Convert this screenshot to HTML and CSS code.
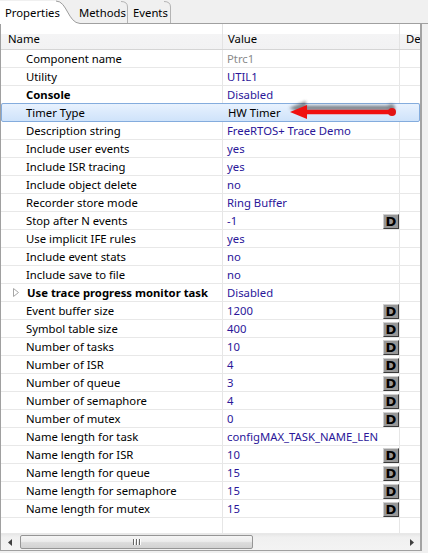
FILE: index.html
```html
<!DOCTYPE html>
<html>
<head>
<meta charset="utf-8">
<link rel="stylesheet" href="styles.css">
</head>
<body>
<div class="tabs">
  <svg class="tabshape" width="428" height="24" viewBox="0 0 428 24">
    <path d="M0,24 L0,1 L56,1 C67,1 68,23 80,23 L80,24 Z" fill="#ffffff"/>
    <path d="M56,1 C67,1 68,23 80,23.5" fill="none" stroke="#9c9c9c" stroke-width="1"/>
    <path d="M80,23.5 H428" fill="none" stroke="#a0a0a0" stroke-width="1"/>
    <path d="M121,1.5 Q127.5,1.5 127.5,7 V23" fill="none" stroke="#b4b4b4" stroke-width="1"/>
    <path d="M164,1.5 Q170.5,1.5 170.5,7 V23" fill="none" stroke="#b4b4b4" stroke-width="1"/>
  </svg>
  <div class="tablist">
    <div class="tab t1">Properties</div>
    <div class="tab t2">Methods</div>
    <div class="tab t3">Events</div>
  </div>
</div>

<div class="panel">
  <div class="head">
    <div class="hc hn">Name</div>
    <div class="hc hv">Value</div>
    <div class="hc hd">De</div>
  </div>

  <div class="row"><div class="n">Component name</div><div class="v grey">Ptrc1</div><div class="d"></div></div>
  <div class="row"><div class="n">Utility</div><div class="v">UTIL1</div><div class="d"></div></div>
  <div class="row"><div class="n b">Console</div><div class="v">Disabled</div><div class="d"></div></div>
  <div class="row sel"><div class="n">Timer Type</div><div class="v black">HW Timer</div><div class="d"></div></div>
  <div class="row"><div class="n">Description string</div><div class="v">FreeRTOS+ Trace Demo</div><div class="d"></div></div>
  <div class="row"><div class="n">Include user events</div><div class="v">yes</div><div class="d"></div></div>
  <div class="row"><div class="n">Include ISR tracing</div><div class="v">yes</div><div class="d"></div></div>
  <div class="row"><div class="n">Include object delete</div><div class="v">no</div><div class="d"></div></div>
  <div class="row"><div class="n">Recorder store mode</div><div class="v">Ring Buffer</div><div class="d"></div></div>
  <div class="row"><div class="n">Stop after N events</div><div class="v"><span>-1</span><span class="btn">D</span></div><div class="d"></div></div>
  <div class="row"><div class="n">Use implicit IFE rules</div><div class="v">yes</div><div class="d"></div></div>
  <div class="row"><div class="n">Include event stats</div><div class="v">no</div><div class="d"></div></div>
  <div class="row"><div class="n">Include save to file</div><div class="v">no</div><div class="d"></div></div>
  <div class="row"><div class="n b exp"><svg class="tri" width="6" height="9" viewBox="0 0 6 9"><path d="M0.5,0.5 L5.5,4.5 L0.5,8.5 Z" fill="#ffffff" stroke="#a6a6a6" stroke-width="1"/></svg>Use trace progress monitor task</div><div class="v">Disabled</div><div class="d"></div></div>
  <div class="row"><div class="n">Event buffer size</div><div class="v"><span>1200</span><span class="btn">D</span></div><div class="d"></div></div>
  <div class="row"><div class="n">Symbol table size</div><div class="v"><span>400</span><span class="btn">D</span></div><div class="d"></div></div>
  <div class="row"><div class="n">Number of tasks</div><div class="v"><span>10</span><span class="btn">D</span></div><div class="d"></div></div>
  <div class="row"><div class="n">Number of ISR</div><div class="v"><span>4</span><span class="btn">D</span></div><div class="d"></div></div>
  <div class="row"><div class="n">Number of queue</div><div class="v"><span>3</span><span class="btn">D</span></div><div class="d"></div></div>
  <div class="row"><div class="n">Number of semaphore</div><div class="v"><span>4</span><span class="btn">D</span></div><div class="d"></div></div>
  <div class="row"><div class="n">Number of mutex</div><div class="v"><span>0</span><span class="btn">D</span></div><div class="d"></div></div>
  <div class="row"><div class="n">Name length for task</div><div class="v">configMAX_TASK_NAME_LEN</div><div class="d"></div></div>
  <div class="row"><div class="n">Name length for ISR</div><div class="v"><span>10</span><span class="btn">D</span></div><div class="d"></div></div>
  <div class="row"><div class="n">Name length for queue</div><div class="v"><span>15</span><span class="btn">D</span></div><div class="d"></div></div>
  <div class="row"><div class="n">Name length for semaphore</div><div class="v"><span>15</span><span class="btn">D</span></div><div class="d"></div></div>
  <div class="row"><div class="n">Name length for mutex</div><div class="v"><span>15</span><span class="btn">D</span></div><div class="d"></div></div>
  <div class="row empty"><div class="n"></div><div class="v"></div><div class="d"></div></div>

  <div class="hscroll">
    <div class="arrowbtn"><svg width="4" height="7" viewBox="0 0 4 7"><path d="M4,0 L0,3.5 L4,7 Z" fill="#404040"/></svg></div>
    <div class="thumb"><span class="grip"></span><span class="grip"></span><span class="grip"></span></div>
    <div class="arrowbtn right"><svg width="4" height="7" viewBox="0 0 4 7"><path d="M0,0 L4,3.5 L0,7 Z" fill="#404040"/></svg></div>
  </div>
</div>

<svg class="redarrow" width="130" height="30" viewBox="280 98 130 30">
  <defs>
    <filter id="blur" x="-20%" y="-50%" width="140%" height="200%">
      <feGaussianBlur stdDeviation="1.8"/>
    </filter>
  </defs>
  <g opacity="0.55" filter="url(#blur)" transform="translate(-1,-4)">
    <path d="M290,112 L307,105 L307,109.5 L392,109.5 L392,114.5 L307,114.5 L307,119 Z" fill="#333333"/>
    <circle cx="392" cy="112" r="4" fill="#333333"/>
  </g>
  <path d="M290,112 L307,105 L307,109.8 L392,109.8 L392,114.2 L307,114.2 L307,119 Z" fill="#f01010"/>
  <circle cx="392" cy="112" r="4" fill="#e31414"/>
</svg>
</body>
</html>
```

FILE: styles.css
```css
html, body {
  margin: 0;
  padding: 0;
}

body {
  position: relative;
  width: 428px;
  height: 553px;
  overflow: hidden;
  background: #f0f0f0;
  font-family: "Noto Sans", "Open Sans", sans-serif;
  font-size: 11.3px;
  color: #000000;
}

.tabs {
  position: relative;
  height: 24px;
}

.tabshape {
  position: absolute;
  left: 0;
  top: 0;
}

.tablist {
  position: relative;
  display: flex;
  height: 24px;
  align-items: center;
  padding-top: 1px;
  box-sizing: border-box;
}

.tab {
  white-space: nowrap;
  color: #000000;
}

.t1 {
  padding-left: 5px;
  width: 74px;
}

.t2 {
  width: 54px;
}

.t3 {
  width: 40px;
}

.panel {
  width: 422px;
  height: 527px;
  box-sizing: border-box;
  background: #ffffff;
  border-left: 1px solid #a0a0a0;
  border-right: 2px solid #a3a3a3;
  border-bottom: 1px solid #a0a0a0;
  overflow: hidden;
}

.head {
  display: grid;
  grid-template-columns: 222px 177px 1fr;
  height: 26px;
  box-sizing: border-box;
  border-bottom: 1px solid #d5d5d5;
  background: linear-gradient(#ffffff 0%, #ffffff 38%, #f4f4f5 40%, #f2f2f3 100%);
}

.hc {
  display: flex;
  align-items: center;
  padding-top: 3px;
  white-space: nowrap;
  overflow: hidden;
  box-sizing: border-box;
}

.hn {
  padding-left: 7px;
  border-right: 1px solid #e3e3e3;
}

.hv {
  padding-left: 5px;
  border-right: 1px solid #e3e3e3;
}

.hd {
  padding-left: 6px;
}

.row {
  display: grid;
  grid-template-columns: 222px 177px 1fr;
  height: 18px;
  box-sizing: border-box;
  border-bottom: 1px solid #e8e8e8;
}

.row > div {
  display: flex;
  align-items: center;
  box-sizing: border-box;
  white-space: nowrap;
  overflow: hidden;
  line-height: 17px;
}

.n {
  padding-left: 25px;
  border-right: 1px solid #e6e6e6;
  color: #000000;
}

.n.b {
  font-weight: bold;
}

.n.exp {
  padding-left: 12px;
}

.tri {
  margin-right: 8px;
  flex: none;
}

.v {
  padding-left: 4px;
  border-right: 1px solid #e6e6e6;
  color: #2a1699;
  justify-content: space-between;
}

.v.grey {
  color: #8a8a8a;
}

.v.black {
  color: #000000;
}

.row.sel {
  height: 19px;
  margin-top: -1px;
  border: 1px solid #84acdd;
  border-radius: 2px;
  background: linear-gradient(#e8f2fe 0%, #dbeafc 50%, #cfe3fa 100%);
}

.row.sel > div {
  border-right: none;
}

.row.sel .n {
  padding-left: 24px;
}

.row.sel .v {
  padding-left: 4px;
}

.row.empty {
  height: 16px;
}

.btn {
  flex: none;
  width: 16px;
  height: 15px;
  margin-top: 1px;
  box-sizing: border-box;
  background: #979797;
  border: 1px solid;
  border-color: #cfcfcf #3a3a3a #3a3a3a #cfcfcf;
  color: #000000;
  font-family: "DejaVu Sans", "Liberation Sans", sans-serif;
  font-weight: bold;
  font-size: 13px;
  line-height: 13px;
  text-align: center;
}

.hscroll {
  display: flex;
  align-items: center;
  height: 16px;
  box-sizing: border-box;
  background: linear-gradient(#e6e6e6 0%, #f0f0f0 20%, #f3f3f3 100%);
}

.arrowbtn {
  width: 17px;
  height: 16px;
  display: flex;
  align-items: center;
  justify-content: center;
  flex: none;
}

.arrowbtn.right {
  margin-left: auto;
}

.thumb {
  width: 233px;
  height: 14px;
  margin-left: 2px;
  box-sizing: border-box;
  border: 1px solid #959595;
  border-radius: 2px;
  background: linear-gradient(#f5f5f5 0%, #ececec 45%, #dcdcdc 55%, #d2d2d2 100%);
  display: flex;
  align-items: center;
  justify-content: center;
  gap: 2px;
}

.grip {
  width: 1px;
  height: 6px;
  background: #666666;
  box-shadow: 1px 0 0 #ffffff;
}

.redarrow {
  position: absolute;
  left: 280px;
  top: 98px;
}
```
